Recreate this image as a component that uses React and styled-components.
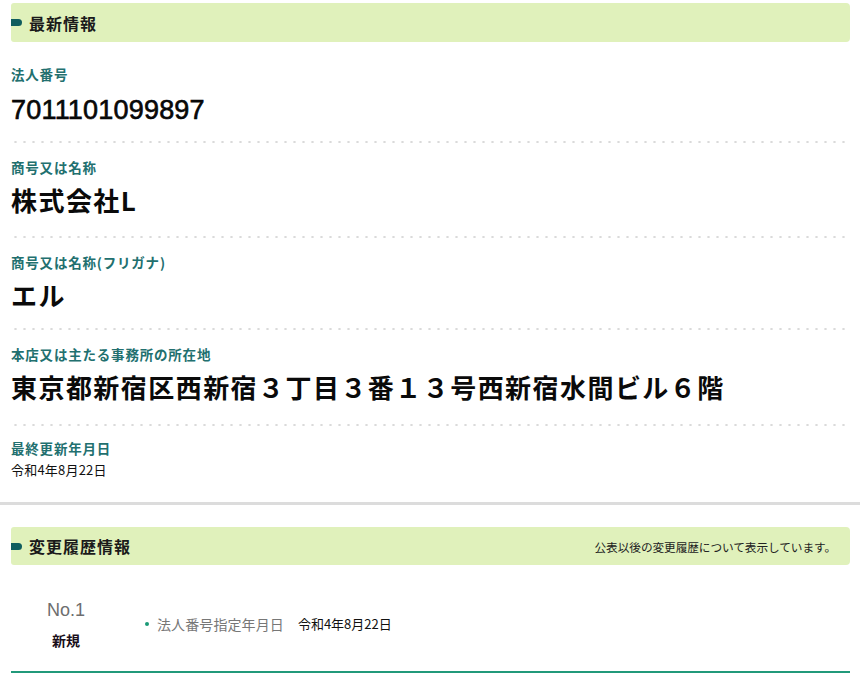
import React from "react";
import styled, { createGlobalStyle } from "styled-components";

const Global = createGlobalStyle`
  html, body { margin: 0; padding: 0; background: #fff; }
  body {
    font-family: "Noto Sans CJK JP", "Liberation Sans", sans-serif;
    color: #111;
  }
`;

const Page = styled.div`
  width: 860px;
`;

const Section = styled.section`
  padding: ${(p) => p.$top || 0}px 10px ${(p) => p.$bottom || 0}px 11px;
`;

const Divider = styled.div`
  height: 3px;
  background: #dcdcdc;
`;

const Heading = styled.div`
  display: flex;
  align-items: center;
  height: ${(p) => p.$h || 39}px;
  background: #e0f1bb;
  border-radius: 3px 4px 4px 3px;
  padding-right: 14px;
`;

const Marker = styled.span`
  width: 11px;
  height: 7px;
  background: #105d5e;
  border-radius: 0 4px 4px 0;
  margin-right: 7px;
  flex: none;
`;

const HeadingTitle = styled.h2`
  margin: 0;
  font-size: 16px;
  font-weight: 700;
  letter-spacing: 1px;
  color: #1a1a1a;
  line-height: 1;
`;

const HeadingNote = styled.span`
  margin-left: auto;
  font-size: 11.7px;
  color: #222;
  letter-spacing: -0.1px;
`;

const Field = styled.div`
  padding: ${(p) => p.$pt}px 0 ${(p) => p.$pb}px;
  background-image: ${(p) =>
    p.$last
      ? "none"
      : "radial-gradient(circle, #dadada 1px, transparent 1.3px)"};
  background-size: 9px 2px;
  background-position: 0 100%;
  background-repeat: repeat-x;
`;

const Label = styled.div`
  font-size: 13.5px;
  line-height: 20px;
  font-weight: 700;
  letter-spacing: 0.8px;
  color: #22706f;
  margin-bottom: ${(p) => p.$gap}px;
`;

const Value = styled.div`
  font-family: ${(p) =>
    p.$num
      ? '"Liberation Sans", "Noto Sans CJK JP", sans-serif'
      : '"Noto Sans CJK JP", "Liberation Sans", sans-serif'};
  font-size: ${(p) => (p.$num ? 27 : 26)}px;
  line-height: 36px;
  font-weight: ${(p) => (p.$num ? 400 : 700)};
  -webkit-text-stroke: ${(p) => (p.$num ? "0.6px #000" : "0")};
  letter-spacing: ${(p) => (p.$num ? 0.2 : 1.45)}px;
  color: #0a0a0a;
`;

const SmallValue = styled.div`
  font-size: 13px;
  line-height: 20px;
  color: #111;
  letter-spacing: 0.2px;
`;

const HistoryRow = styled.div`
  display: flex;
  align-items: center;
  padding: 33px 0 21px;
  border-bottom: 2px solid #21997a;
`;

const NoCol = styled.div`
  width: 110px;
  display: flex;
  flex-direction: column;
  align-items: center;
  gap: 8px;
  flex: none;
`;

const NoText = styled.div`
  font-family: "Liberation Sans", sans-serif;
  font-size: 18px;
  line-height: 24px;
  color: #6e6e6e;
`;

const Kind = styled.div`
  font-size: 14px;
  line-height: 20px;
  font-weight: 700;
  color: #1a0f1a;
`;

const ChangeList = styled.ul`
  list-style: none;
  margin: 0;
  padding: 0 0 0 24px;
`;

const ChangeItem = styled.li`
  display: flex;
  align-items: center;
  font-size: 13px;
  line-height: 20px;
`;

const Dot = styled.span`
  width: 4px;
  height: 4px;
  border-radius: 50%;
  background: #1b9a77;
  margin-right: 8px;
`;

const ItemKey = styled.span`
  font-size: 14px;
  color: #777;
  letter-spacing: 0.1px;
  margin-right: 14px;
`;

const fields = [
  { label: "法人番号", value: "7011101099897", num: true, pt: 22, gap: 8, pb: 15 },
  { label: "商号又は名称", value: "株式会社L", pt: 14, gap: 5, pb: 20 },
  { label: "商号又は名称(フリガナ)", value: "エル", pt: 14, gap: 5, pb: 17 },
  {
    label: "本店又は主たる事務所の所在地",
    value: "東京都新宿区西新宿３丁目３番１３号西新宿水間ビル６階",
    pt: 14,
    gap: 5,
    pb: 21,
  },
];

export default function App() {
  return (
    <Page>
      <Global />
      <Section $top={3}>
        <Heading $h={39}>
          <Marker />
          <HeadingTitle>最新情報</HeadingTitle>
        </Heading>
        {fields.map((f) => (
          <Field key={f.label} $pt={f.pt} $pb={f.pb}>
            <Label $gap={f.gap}>{f.label}</Label>
            <Value $num={f.num}>{f.value}</Value>
          </Field>
        ))}
        <Field $last $pt={12} $pb={22}>
          <Label $gap={2}>最終更新年月日</Label>
          <SmallValue>令和4年8月22日</SmallValue>
        </Field>
      </Section>
      <Divider />
      <Section $top={22}>
        <Heading $h={38}>
          <Marker />
          <HeadingTitle>変更履歴情報</HeadingTitle>
          <HeadingNote>公表以後の変更履歴について表示しています。</HeadingNote>
        </Heading>
        <HistoryRow>
          <NoCol>
            <NoText>No.1</NoText>
            <Kind>新規</Kind>
          </NoCol>
          <ChangeList>
            <ChangeItem>
              <Dot />
              <ItemKey>法人番号指定年月日</ItemKey>
              <span>令和4年8月22日</span>
            </ChangeItem>
          </ChangeList>
        </HistoryRow>
      </Section>
    </Page>
  );
}
